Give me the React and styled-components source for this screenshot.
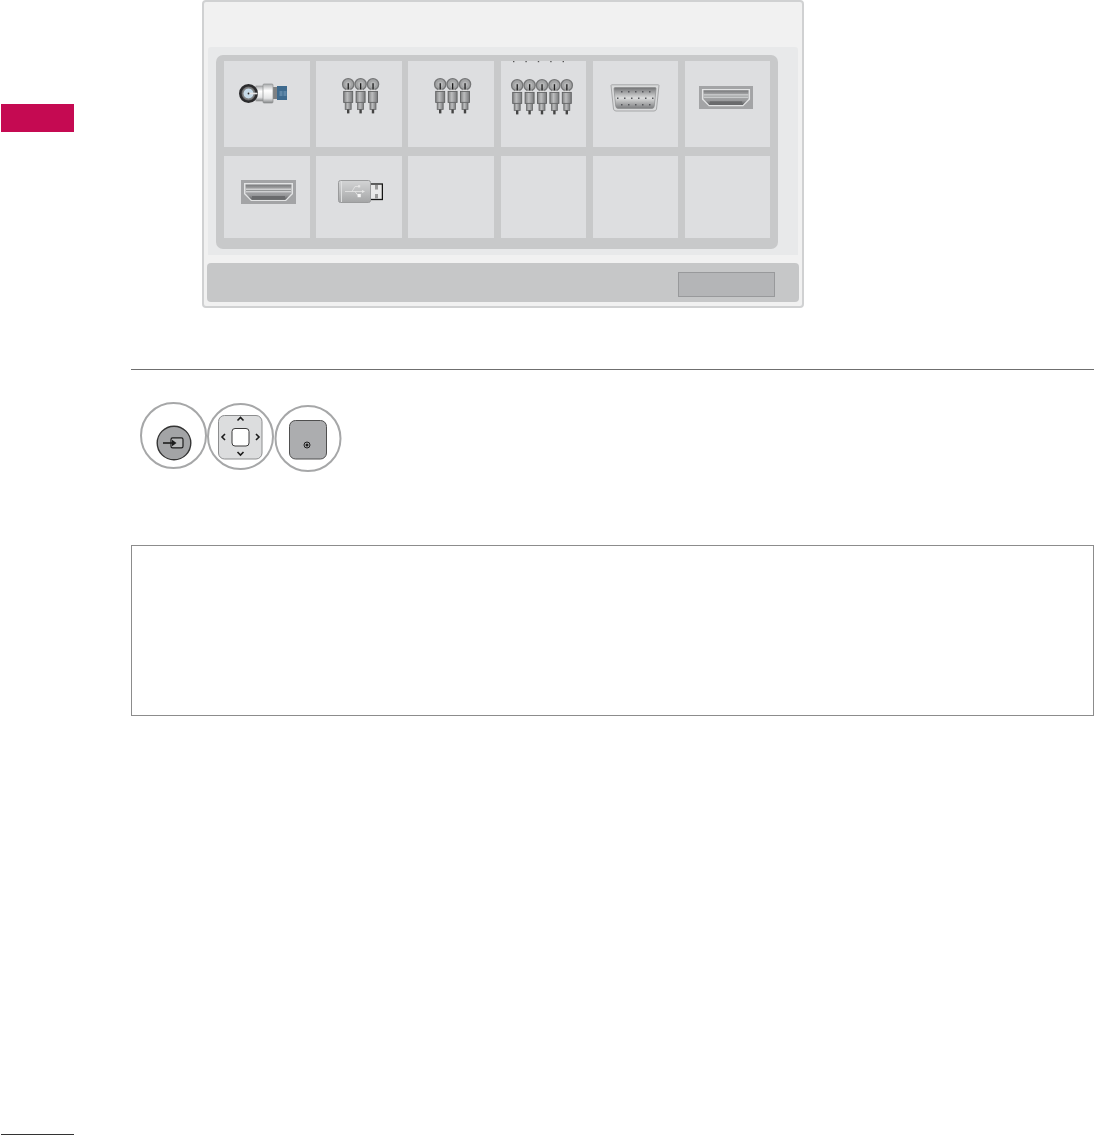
import React from "react";
import styled, { createGlobalStyle } from "styled-components";

const Global = createGlobalStyle`
  html, body { margin: 0; padding: 0; background: #fff; font-family: "Liberation Sans", Arial, sans-serif; }
`;

const Page = styled.div`
  display: grid;
  grid-template-columns: 131px 963px;
  width: 1094px;
  height: 1135px;
  overflow: hidden;
`;
const Sidebar = styled.aside`
  display: flex;
  flex-direction: column;
  justify-content: space-between;
  padding: 104px 0 0 1px;
  box-sizing: border-box;
`;
const SideTab = styled.div`
  width: 73px;
  height: 28px;
  background: #c50a52;
`;
const FootRule = styled.div`
  width: 73px;
  height: 1px;
  background: #333;
`;
const Main = styled.main`
  display: flex;
  flex-direction: column;
  align-items: flex-start;
`;
const TvFrame = styled.section`
  box-sizing: border-box;
  width: 602px;
  height: 308px;
  margin-left: 71px;
  padding: 0 3px 4px 3px;
  background: #f1f1f1;
  border: 2px solid #d0d1d2;
  border-radius: 4px;
  display: flex;
  flex-direction: column;
`;
const TitleBar = styled.div`
  height: 45px;
  flex: none;
`;
const InputPanel = styled.div`
  box-sizing: border-box;
  height: 208px;
  margin: 0 0 0 1px;
  width: 590px;
  padding: 8px 20px 6px 8px;
  background: #e8e9ea;
  border-radius: 3px 3px 0 0;
`;
const Grid = styled.div`
  box-sizing: border-box;
  height: 194px;
  display: grid;
  grid-template-columns: repeat(6, 85.5px);
  grid-template-rows: 86px 82px;
  column-gap: 6.7px;
  row-gap: 9px;
  padding: 6px 0 0 8px;
  background: #c8c9ca;
  border-radius: 7px;
`;
const Cell = styled.div`
  background: #dddee0;
  display: flex;
  justify-content: center;
  align-items: flex-start;
  padding: ${(p) => p.$top || 0}px ${(p) => p.$pushLeft || 0}px 0 ${(p) => p.$pushRight || 0}px;
  box-sizing: border-box;
`;
const BottomBar = styled.div`
  box-sizing: border-box;
  flex: none;
  height: 39px;
  margin: 8px 0 0 0;
  background: #c6c7c8;
  border-radius: 4px;
  display: flex;
  justify-content: flex-end;
  align-items: flex-start;
  padding: 9px 24px 0 0;
`;
const ExitButton = styled.div`
  width: 97px;
  height: 25px;
  box-sizing: border-box;
  background: #b4b5b7;
  border: 1px solid #98999b;
`;
const Rule = styled.hr`
  width: 963px;
  height: 1px;
  margin: 61px 0 0;
  border: 0;
  background: #6f6f6f;
`;
const RemoteRow = styled.div`
  display: flex;
  align-items: flex-start;
  margin: 32px 0 0 9px;
  height: 143px;
`;
const RemoteIcon = styled.svg`
  display: block;
  flex: none;
  margin-top: ${(p) => p.$drop}px;
`;
const NoteBox = styled.div`
  box-sizing: border-box;
  width: 963px;
  height: 171px;
  border: 1px solid #8c8c8c;
`;

const Defs = () => (
  <svg width="0" height="0" style={{ position: "absolute" }} aria-hidden="true">
    <defs>
      <linearGradient id="metalH" x1="0" x2="1" y1="0" y2="0">
        <stop offset="0" stopColor="#808182" />
        <stop offset=".4" stopColor="#bcbdbe" />
        <stop offset="1" stopColor="#77787a" />
      </linearGradient>
      <linearGradient id="coaxBody" x1="0" x2="0" y1="0" y2="1">
        <stop offset="0" stopColor="#a9abad" />
        <stop offset=".35" stopColor="#ffffff" />
        <stop offset=".75" stopColor="#e3e4e5" />
        <stop offset="1" stopColor="#838587" />
      </linearGradient>
      <linearGradient id="portFace" x1="0" x2="0" y1="0" y2="1">
        <stop offset="0" stopColor="#77787a" />
        <stop offset=".3" stopColor="#a9aaab" />
        <stop offset=".7" stopColor="#9a9b9d" />
        <stop offset="1" stopColor="#5e5f61" />
      </linearGradient>
      <linearGradient id="vgaFace" x1="0" x2="0" y1="0" y2="1">
        <stop offset="0" stopColor="#717274" />
        <stop offset=".5" stopColor="#dcdddd" />
        <stop offset="1" stopColor="#7c7d7f" />
      </linearGradient>
      <linearGradient id="usbBody" x1="0" x2="0" y1="0" y2="1">
        <stop offset="0" stopColor="#d3d4d5" />
        <stop offset=".5" stopColor="#bdbebf" />
        <stop offset="1" stopColor="#a4a5a6" />
      </linearGradient>
    </defs>
  </svg>
);

const RcaPlug = ({ x, y }) => (
  <g transform={`translate(${x} ${y})`}>
    <circle cx="6.2" cy="6.2" r="5.6" fill="#a3a4a5" stroke="#757677" strokeWidth="1.4" />
    <circle cx="6.2" cy="6.2" r="2.8" fill="#b5b6b7" />
    <rect x="5.6" y="5.2" width="1.3" height="7" fill="#1e1e1e" />
    <rect x="3.8" y="11.6" width="4.8" height="1.8" fill="#e4e4e4" />
    <rect x="1.7" y="13.4" width="9" height="11" fill="url(#metalH)" stroke="#606162" strokeWidth=".9" />
    <rect x="3.2" y="24.4" width="6" height="7" fill="url(#metalH)" stroke="#6a6b6c" strokeWidth=".8" />
    <rect x="5" y="31.4" width="2.4" height="4" fill="#444" />
  </g>
);

const RcaIcon = ({ count, offset = 0, ticks = false }) => {
  const w = (count - 1) * 12.4 + 13;
  return (
    <svg width={w} height={36 + offset} viewBox={`0 0 ${w} ${36 + offset}`} style={{ overflow: "visible" }}>
      {ticks && Array.from({ length: count }, (_, i) => (
        <rect key={i} x={2 + i * 12.4} y="0" width="1.4" height="1.2" fill="#555" />
      ))}
      {Array.from({ length: count }, (_, i) => (
        <RcaPlug key={i} x={i * 12.4} y={offset} />
      ))}
    </svg>
  );
};

const CoaxIcon = () => (
  <svg width="49" height="21" viewBox="0 0 49 21">
    <rect x="38" y="3" width="10" height="14" fill="#3e6a8e" />
    <rect x="40.5" y="8" width="3" height="5" fill="#5f87a8" />
    <rect x="44.5" y="8" width="3" height="5" fill="#5f87a8" />
    <rect x="33" y="4" width="5" height="12" fill="#7f8183" />
    <rect x="17" y="3" width="10" height="15" fill="url(#coaxBody)" stroke="#9a9b9c" strokeWidth=".7" />
    <rect x="24" y="1" width="10" height="19" rx="1" fill="url(#coaxBody)" stroke="#8e8f90" strokeWidth=".7" />
    <circle cx="9.5" cy="10.5" r="8.2" fill="#6b6c6e" stroke="#2b2b2d" strokeWidth="2.6" />
    <circle cx="9.5" cy="10.5" r="5.6" fill="#c8dcea" stroke="#808182" strokeWidth="1.1" />
    <rect x="9.5" y="9.7" width="9" height="1.6" fill="#e6e6e6" />
    <circle cx="9.5" cy="10.5" r=".9" fill="#2a2a2a" />
  </svg>
);

const VgaIcon = () => {
  const row = (y, xs) => xs.map((x) => <rect key={`${x}-${y}`} x={x} y={y} width="1.5" height="1.5" fill="#55565a" />);
  return (
    <svg width="50" height="28" viewBox="0 0 50 28">
      <path d="M1 1.5Q1 .8 2 .8H48Q49 .8 49 1.5L46.5 25Q46 27 44 27H6Q4 27 3.5 25Z" fill="#d9dadb" stroke="#a6a7a8" strokeWidth="1" />
      <path d="M5 3.5H45Q46.5 3.5 46 5L44.3 22Q44 24.5 42 24.5H8Q6 24.5 5.7 22L4 5Q3.8 3.5 5 3.5Z" fill="url(#vgaFace)" stroke="#8b8c8e" strokeWidth=".7" />
      {row(7, [11, 18, 25, 32, 39])}
      {row(13.5, [7, 14, 21, 28, 35, 42])}
      {row(20, [11, 18, 25, 32, 39])}
    </svg>
  );
};

const HdmiIcon = ({ w, h }) => (
  <svg width={w} height={h} viewBox="0 0 55 24" preserveAspectRatio="none">
    <rect x="0" y="0" width="55" height="24" fill="#a3a4a6" />
    <path d="M3 3H52V14L45 21H10L3 14Z" fill="#e2e3e4" />
    <path d="M4.5 4.5H50.5V13.5L44.5 19.8H10.5L4.5 13.5Z" fill="url(#portFace)" />
    <rect x="5" y="8.6" width="45" height="3.8" fill="#cfd0d1" />
    <rect x="5" y="10.1" width="45" height=".8" fill="#87888a" />
    <rect x="11" y="16" width="33" height="3.8" fill="#6a6b6d" />
  </svg>
);

const UsbIcon = () => (
  <svg width="45" height="23" viewBox="0 0 45 23">
    <rect x="32" y="4" width="12.4" height="15.5" fill="#e9e9e9" stroke="#161616" strokeWidth="1.3" />
    <rect x="37" y="5" width="3" height="4.5" fill="#9a9a9a" />
    <rect x="37" y="14" width="3" height="4.5" fill="#9a9a9a" />
    <rect x="0.5" y="0.5" width="32" height="22" rx="2" fill="url(#usbBody)" stroke="#9a9b9c" />
    <rect x="3" y="1" width="1" height="21" fill="#dedfe0" />
    <path d="M7 11.5H25M14 11.5L17 6.5H20M17 11.5L20 15.5H21" fill="none" stroke="#e6e6e6" strokeWidth=".8" />
    <rect x="20" y="5.2" width="2.2" height="2.2" fill="#e6e6e6" />
    <rect x="19.6" y="14" width="3.2" height="3.2" fill="#f6f6f6" />
    <path d="M24 9.9L27 11.5L24 13.1Z" fill="#e6e6e6" />
  </svg>
);

const EnterIcon = () => (
  <RemoteIcon $drop={0} width="67" height="68" viewBox="0 0 67 68">
    <circle cx="33.5" cy="33.5" r="32.5" fill="#fff" stroke="#a6a7a8" strokeWidth="2" />
    <circle cx="34" cy="41" r="16.8" fill="#a3a4a6" stroke="#343434" strokeWidth="1.4" />
    <rect x="31" y="35.8" width="12" height="10" rx="1.6" fill="#b7b8b9" stroke="#1d1d1d" strokeWidth="1.2" />
    <path d="M23 41H33" fill="none" stroke="#1d1d1d" strokeWidth="1.6" />
    <path d="M32 37.8L36.5 41L32 44.2Z" fill="#1d1d1d" />
  </RemoteIcon>
);

const NavIcon = () => (
  <RemoteIcon $drop={1} width="67" height="68" viewBox="0 0 67 68">
    <circle cx="33.5" cy="33.5" r="32.5" fill="#fff" stroke="#a6a7a8" strokeWidth="2" />
    <rect x="11.5" y="12.5" width="43.5" height="43.5" rx="6" fill="#dcddde" stroke="#8c8d8e" strokeWidth="1" />
    <rect x="25" y="25.5" width="17" height="17.5" rx="3" fill="#fff" stroke="#3a3a3a" strokeWidth="1" />
    <path d="M30.5 17.5L33.5 14.5L36.5 17.5M30.5 49L33.5 52L36.5 49M18 31L15 34L18 37M49 31L52 34L49 37" fill="none" stroke="#1c1c1c" strokeWidth="1.6" />
  </RemoteIcon>
);

const OkIcon = () => (
  <RemoteIcon $drop={3} width="68" height="68" viewBox="0 0 68 68">
    <circle cx="34" cy="33.5" r="32.5" fill="#fff" stroke="#a6a7a8" strokeWidth="2" />
    <rect x="15.5" y="15.5" width="37" height="38.5" rx="6" fill="#acadaf" stroke="#4f4f4f" strokeWidth="1" />
    <circle cx="33" cy="40" r="3" fill="none" stroke="#1f1f1f" strokeWidth="1" />
    <circle cx="33" cy="40" r="1.5" fill="#1f1f1f" />
  </RemoteIcon>
);

export default function App() {
  return (
    <Page>
      <Global />
      <Defs />
      <Sidebar>
        <SideTab />
        <FootRule />
      </Sidebar>
      <Main>
        <TvFrame>
          <TitleBar />
          <InputPanel>
            <Grid>
              <Cell $top={22} $pushLeft={7}><CoaxIcon /></Cell>
              <Cell $top={17} $pushRight={4}><RcaIcon count={3} /></Cell>
              <Cell $top={17} $pushRight={4}><RcaIcon count={3} /></Cell>
              <Cell $pushLeft={3}><RcaIcon count={5} offset={18} ticks /></Cell>
              <Cell $top={23} $pushLeft={1}><VgaIcon /></Cell>
              <Cell $top={25} $pushLeft={3}><HdmiIcon w={54} h={23} /></Cell>
              <Cell $top={24} $pushRight={3}><HdmiIcon w={55} h={24} /></Cell>
              <Cell $top={24} $pushRight={4}><UsbIcon /></Cell>
              <Cell />
              <Cell />
              <Cell />
              <Cell />
            </Grid>
          </InputPanel>
          <BottomBar>
            <ExitButton />
          </BottomBar>
        </TvFrame>
        <Rule />
        <RemoteRow>
          <EnterIcon />
          <NavIcon />
          <OkIcon />
        </RemoteRow>
        <NoteBox />
      </Main>
    </Page>
  );
}
